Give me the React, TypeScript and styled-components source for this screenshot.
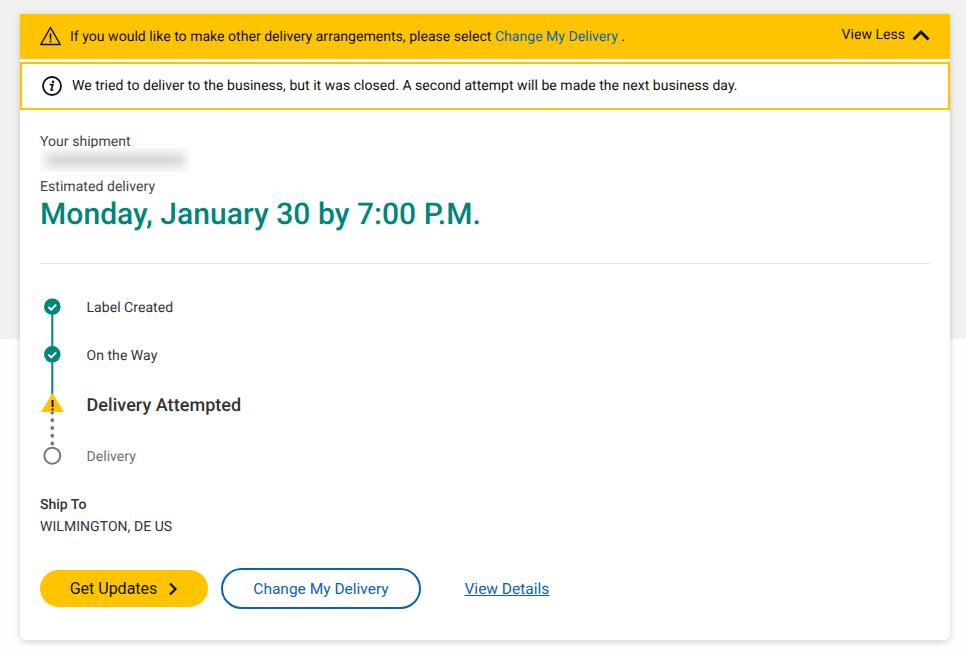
import React from "react";
import styled, { createGlobalStyle } from "styled-components";

const Global = createGlobalStyle`
  html, body { margin: 0; padding: 0; }
  body { font-family: Roboto, "Liberation Sans", sans-serif; background: #fff; text-rendering: geometricPrecision; }
`;

const Page = styled.div`
  width: 966px;
  height: 653px;
  overflow: hidden;
  box-sizing: border-box;
  padding: 14px 16px 0 20px;
  background: linear-gradient(to bottom, #f0f0ef 0, #f0f0ef 339px, #fefefe 339px);
`;

const Card = styled.main`
  width: 930px;
  height: 626px;
  background: #fff;
  border-radius: 0 0 6px 6px;
  box-shadow: 0 2px 6px rgba(0, 0, 0, 0.18);
  display: flex;
  flex-direction: column;
`;

const Banner = styled.div`
  height: 45px;
  flex: none;
  box-sizing: border-box;
  background: #ffc400;
  display: flex;
  align-items: center;
  padding: 0 20px;
  font-size: 14px;
  color: #111;
  letter-spacing: 0.035px;
`;

const BannerIcon = styled.svg`
  width: 22px;
  height: 20px;
  margin-right: 8px;
  margin-bottom: 1px;
  flex: none;
`;

const BannerText = styled.span`
  flex: 1;
`;

const InlineLink = styled.a`
  color: #0b62b5;
`;

const Toggle = styled.span`
  display: flex;
  align-items: center;
  gap: 7px;
  padding-bottom: 4px;
`;

const Chevron = styled.svg`
  width: 18px;
  height: 12px;
`;

const Notice = styled.div`
  height: 48px;
  flex: none;
  margin-top: 3px;
  box-sizing: border-box;
  border: 2px solid #ffc400;
  display: flex;
  align-items: center;
  padding-left: 20px;
  font-size: 14px;
  color: #111;
  letter-spacing: 0.035px;
`;

const NoticeIcon = styled.svg`
  width: 20px;
  height: 20px;
  margin-right: 10px;
  flex: none;
`;

const Body = styled.div`
  padding: 23px 20px 0;
  display: flex;
  flex-direction: column;
`;

const Muted = styled.div`
  font-size: 14px;
  line-height: 18px;
  color: #444;
  letter-spacing: 0.05px;
`;

const Redacted = styled.div`
  width: 150px;
  height: 24px;
  margin-top: -3px;
  padding: 6px 5px;
  box-sizing: border-box;
  overflow: hidden;
  background: #fbfbfb;
  &::before {
    content: "";
    display: block;
    height: 12px;
    border-radius: 6px;
    background: #d2d2d2;
    filter: blur(5px);
  }
`;

const EstimatedLabel = styled(Muted)`
  margin-top: 6px;
`;

const Estimate = styled.h1`
  margin: 0;
  font-size: 30px;
  line-height: 38px;
  font-weight: 500;
  color: #00857a;
  letter-spacing: 0.06px;
`;

const Divider = styled.hr`
  margin: 29px 0 0;
  border: 0;
  border-top: 1px solid #e6e6e6;
`;

const Timeline = styled.ol`
  list-style: none;
  margin: 0;
  padding: 0;
  height: 232px;
  position: relative;
`;

const Step = styled.li<{ $top: number }>`
  position: absolute;
  left: 46.5px;
  top: ${(p) => p.$top}px;
  transform: translateY(-50%);
  white-space: nowrap;
`;

const StepText = styled.span<{ $kind?: "current" | "future" }>`
  font-size: ${(p) => (p.$kind === "current" ? "18px" : "14px")};
  font-weight: ${(p) => (p.$kind === "current" ? 500 : 400)};
  color: ${(p) => (p.$kind === "future" ? "#707070" : "#333")};
  letter-spacing: 0.05px;
`;

const Rail = styled.svg`
  position: absolute;
  left: 0;
  top: 0;
  width: 26px;
  height: 216px;
`;

const ShipLabel = styled.div`
  font-size: 14px;
  line-height: 18px;
  font-weight: 500;
  color: #333;
`;

const ShipValue = styled.div`
  margin-top: 4px;
  font-size: 14px;
  line-height: 18px;
  color: #333;
  letter-spacing: 0.05px;
`;

const Actions = styled.div`
  margin-top: 32px;
  display: flex;
  align-items: center;
`;

const Primary = styled.button`
  width: 168px;
  height: 37px;
  border: 0;
  border-radius: 19px;
  background: #ffc400;
  color: #111;
  font: 400 16px Roboto, sans-serif;
  display: flex;
  align-items: center;
  justify-content: center;
  gap: 11px;
  padding: 0;
`;

const Secondary = styled.button`
  margin-left: 13px;
  width: 200px;
  height: 41px;
  box-sizing: border-box;
  border: 2px solid #0b62b5;
  border-radius: 21px;
  background: #fff;
  color: #0b62b5;
  font: 400 15.5px Roboto, sans-serif;
  padding: 0;
`;

const DetailsLink = styled.a`
  margin-left: 43.5px;
  color: #0b62b5;
  font-size: 15.5px;
  text-decoration: underline;
`;

export default function App() {
  return (
    <>
      <Global />
      <Page>
        <Card>
          <Banner>
            <BannerIcon viewBox="0 0 22 20" fill="none">
              <path d="M10.500 1.500 0.800 18.500h19.400L10.500 1.500Z" stroke="#111" strokeWidth="1.500" strokeLinejoin="round" />
              <path d="M10.500 7.500v6" stroke="#111" strokeWidth="1.600" />
              <circle cx="10.500" cy="15.600" r="1" fill="#111" />
            </BannerIcon>
            <BannerText>
              If you would like to make other delivery arrangements, please select{" "}
              <InlineLink>Change My Delivery</InlineLink> .
            </BannerText>
            <Toggle>
              View Less
              <Chevron viewBox="0 0 18 12" fill="none">
                <path d="M1.500 10.500 9 3l7.500 7.500" stroke="#111" strokeWidth="3" />
              </Chevron>
            </Toggle>
          </Banner>
          <Notice>
            <NoticeIcon viewBox="0 0 20 20" fill="none">
              <circle cx="10" cy="10" r="9" stroke="#111" strokeWidth="1.800" />
              <path d="M7.800 8.700h3l-1.600 5.300h2.200" stroke="#111" strokeWidth="1.700" />
              <circle cx="11" cy="5.800" r="1.300" fill="#111" />
            </NoticeIcon>
            We tried to deliver to the business, but it was closed. A second attempt will be made the next business day.
          </Notice>
          <Body>
            <Muted>Your shipment</Muted>
            <Redacted />
            <EstimatedLabel>Estimated delivery</EstimatedLabel>
            <Estimate>Monday, January 30 by 7:00 P.M.</Estimate>
            <Divider />
            <Timeline>
              <Rail viewBox="0 0 26 216" fill="none">
                <path d="M12.300 44v88" stroke="#00857a" strokeWidth="2" />
                <path d="M12.300 148.500v31.500" stroke="#777" strokeWidth="3.800" strokeLinecap="round" strokeDasharray="0 7.750" />
                <circle cx="12.300" cy="42.700" r="8.300" fill="#00857a" />
                <path d="M8.400 43l2.800 2.700 5-5" stroke="#fff" strokeWidth="1.900" />
                <circle cx="12.300" cy="90.300" r="8.300" fill="#00857a" />
                <path d="M8.400 90.600l2.800 2.700 5-5" stroke="#fff" strokeWidth="1.900" />
                <path d="M12.500 129 24 148H1Z" fill="#ffc400" />
                <path d="M12.500 136v7" stroke="#111" strokeWidth="2" />
                <rect x="11.500" y="144.500" width="2" height="2" fill="#111" />
                <circle cx="12.300" cy="191.700" r="8" fill="#fff" stroke="#777" strokeWidth="2" />
              </Rail>
              <Step $top={42}><StepText>Label Created</StepText></Step>
              <Step $top={90}><StepText>On the Way</StepText></Step>
              <Step $top={141}><StepText $kind="current">Delivery Attempted</StepText></Step>
              <Step $top={191}><StepText $kind="future">Delivery</StepText></Step>
            </Timeline>
            <ShipLabel>Ship To</ShipLabel>
            <ShipValue>WILMINGTON, DE US</ShipValue>
            <Actions>
              <Primary>
                Get Updates
                <svg width="10" height="14" viewBox="0 0 10 14" fill="none">
                  <path d="M2 1.500 7.500 7 2 12.500" stroke="#111" strokeWidth="2.200" />
                </svg>
              </Primary>
              <Secondary>Change My Delivery</Secondary>
              <DetailsLink>View Details</DetailsLink>
            </Actions>
          </Body>
        </Card>
      </Page>
    </>
  );
}
